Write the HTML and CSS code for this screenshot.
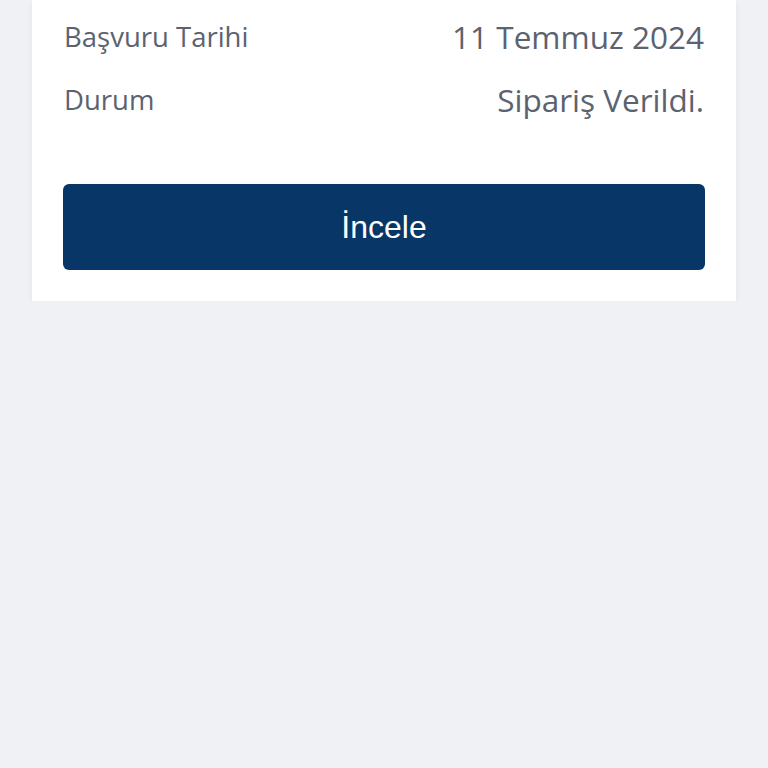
FILE: index.html
```html
<!DOCTYPE html>
<html lang="tr">
<head>
    <meta charset="UTF-8">
    <title>Başvuru</title>
    <link rel="stylesheet" href="styles.css">
</head>
<body>
    <div class="card">
        <div class="row">
            <div class="label">Başvuru Tarihi</div>
            <div class="value">11 Temmuz 2024</div>
        </div>
        <div class="row">
            <div class="label">Durum</div>
            <div class="value">Sipariş Verildi.</div>
        </div>

        <div class="btn">İncele</div>
    </div>
</body>
</html>
```

FILE: styles.css
```css
body {
    margin: 0;
    background: #eff1f5;
    font-family: "Open Sans", sans-serif;
}

.card {
    margin: 0 32px;
    padding: 5px 31px 31px;
    background: #fff;
    box-shadow: 0 2px 6px rgba(20, 30, 60, 0.06);
}

.row {
    display: flex;
    justify-content: space-between;
    align-items: center;
    height: 63px;
    padding: 0 1px;
    color: #5b6270;
}

.label {
    font-size: 27.5px;
}

.value {
    font-size: 31.5px;
}

.btn {
    margin-top: 53px;
    height: 86px;
    display: flex;
    align-items: center;
    justify-content: center;
    background: #083666;
    border-radius: 6px;
    color: #fff;
    font-family: "Liberation Sans", Arial, sans-serif;
    font-size: 32px;
    cursor: pointer;
}
```
